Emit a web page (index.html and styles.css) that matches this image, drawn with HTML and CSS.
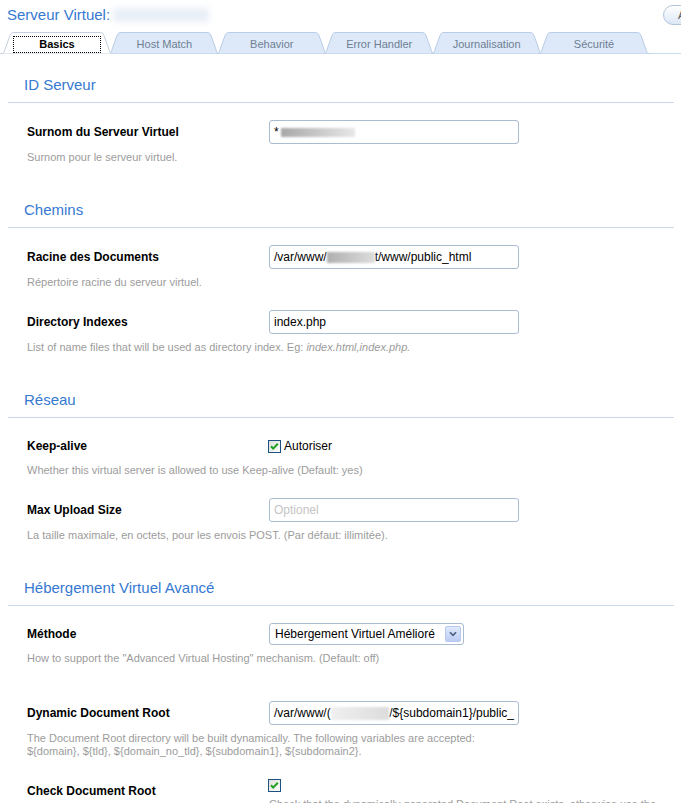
FILE: index.html
```html
<!DOCTYPE html>
<html lang="fr">
<head>
<meta charset="utf-8">
<title>Serveur Virtuel</title>
<link rel="stylesheet" href="styles.css">
</head>
<body>
<div class="header">
  <h1 class="title">Serveur Virtuel: <span class="blur-title"></span></h1>
  <button class="help-btn">Aide</button>
</div>

<div class="tabs">
  <div class="tab active">
    <svg class="tab-bg" viewBox="0 0 112 22" preserveAspectRatio="none"><path d="M0,22 C3,22 3.5,19 4.5,16 L9,3.5 C10,1 11,0.5 14,0.5 L98,0.5 C101,0.5 102,1 103,3.5 L107.5,16 C108.5,19 109,22 112,22 Z"/></svg>
    <span class="tab-label">Basics</span>
  </div>
  <div class="tab">
    <svg class="tab-bg" viewBox="0 0 112 22" preserveAspectRatio="none"><path d="M0,22 C3,22 3.5,19 4.5,16 L9,3.5 C10,1 11,0.5 14,0.5 L98,0.5 C101,0.5 102,1 103,3.5 L107.5,16 C108.5,19 109,22 112,22 Z"/></svg>
    <span class="tab-label">Host Match</span>
  </div>
  <div class="tab">
    <svg class="tab-bg" viewBox="0 0 112 22" preserveAspectRatio="none"><path d="M0,22 C3,22 3.5,19 4.5,16 L9,3.5 C10,1 11,0.5 14,0.5 L98,0.5 C101,0.5 102,1 103,3.5 L107.5,16 C108.5,19 109,22 112,22 Z"/></svg>
    <span class="tab-label">Behavior</span>
  </div>
  <div class="tab">
    <svg class="tab-bg" viewBox="0 0 112 22" preserveAspectRatio="none"><path d="M0,22 C3,22 3.5,19 4.5,16 L9,3.5 C10,1 11,0.5 14,0.5 L98,0.5 C101,0.5 102,1 103,3.5 L107.5,16 C108.5,19 109,22 112,22 Z"/></svg>
    <span class="tab-label">Error Handler</span>
  </div>
  <div class="tab">
    <svg class="tab-bg" viewBox="0 0 112 22" preserveAspectRatio="none"><path d="M0,22 C3,22 3.5,19 4.5,16 L9,3.5 C10,1 11,0.5 14,0.5 L98,0.5 C101,0.5 102,1 103,3.5 L107.5,16 C108.5,19 109,22 112,22 Z"/></svg>
    <span class="tab-label">Journalisation</span>
  </div>
  <div class="tab">
    <svg class="tab-bg" viewBox="0 0 112 22" preserveAspectRatio="none"><path d="M0,22 C3,22 3.5,19 4.5,16 L9,3.5 C10,1 11,0.5 14,0.5 L98,0.5 C101,0.5 102,1 103,3.5 L107.5,16 C108.5,19 109,22 112,22 Z"/></svg>
    <span class="tab-label">Sécurité</span>
  </div>
</div>

<div class="content">
  <section class="section">
    <h2 class="section-title">ID Serveur</h2>
    <div class="rows">
      <div class="row">
        <div class="label">Surnom du Serveur Virtuel</div>
        <div class="field"><div class="input">*<span class="blur blur-a"></span></div></div>
        <div class="desc">Surnom pour le serveur virtuel.</div>
      </div>
    </div>
  </section>

  <section class="section">
    <h2 class="section-title">Chemins</h2>
    <div class="rows">
      <div class="row">
        <div class="label">Racine des Documents</div>
        <div class="field"><div class="input">/var/www/<span class="blur blur-b"></span>t/www/public_html</div></div>
        <div class="desc">Répertoire racine du serveur virtuel.</div>
      </div>
      <div class="row">
        <div class="label">Directory Indexes</div>
        <div class="field"><div class="input">index.php</div></div>
        <div class="desc">List of name files that will be used as directory index. Eg: <em>index.html,index.php.</em></div>
      </div>
    </div>
  </section>

  <section class="section">
    <h2 class="section-title">Réseau</h2>
    <div class="rows">
      <div class="row row-check">
        <div class="label">Keep-alive</div>
        <div class="field">
          <span class="checkbox"><svg viewBox="0 0 13 13" width="13" height="13"><defs><linearGradient id="cb1" x1="0" y1="0" x2="1" y2="1"><stop offset="0" stop-color="#dcdcd7"/><stop offset="1" stop-color="#ffffff"/></linearGradient></defs><rect x="0.5" y="0.5" width="12" height="12" fill="url(#cb1)" stroke="#1c5180"/><path d="M3,6.2 L5.2,8.6 L9.8,3.8" fill="none" stroke="#21a121" stroke-width="2"/></svg></span>
          <span class="check-text">Autoriser</span>
        </div>
        <div class="desc">Whether this virtual server is allowed to use Keep-alive (Default: yes)</div>
      </div>
      <div class="row">
        <div class="label">Max Upload Size</div>
        <div class="field"><div class="input placeholder">Optionel</div></div>
        <div class="desc">La taille maximale, en octets, pour les envois POST. (Par défaut: illimitée).</div>
      </div>
    </div>
  </section>

  <section class="section">
    <h2 class="section-title">Hébergement Virtuel Avancé</h2>
    <div class="rows">
      <div class="row row-select">
        <div class="label">Méthode</div>
        <div class="field">
          <div class="select">
            <span class="select-text">Hébergement Virtuel Amélioré</span>
            <span class="select-btn"><svg viewBox="0 0 16 16" width="16" height="16"><path d="M4.5,6 L8,9.5 L11.5,6" fill="none" stroke="#4d6185" stroke-width="2"/></svg></span>
          </div>
        </div>
        <div class="desc">How to support the "Advanced Virtual Hosting" mechanism. (Default: off)</div>
      </div>
      <div class="row row-spaced">
        <div class="label">Dynamic Document Root</div>
        <div class="field"><div class="input">/var/www/(<span class="blur blur-c"></span>/${subdomain1}/public_</div></div>
        <div class="desc">The Document Root directory will be built dynamically. The following variables are accepted:<br>${domain}, ${tld}, ${domain_no_tld}, ${subdomain1}, ${subdomain2}.</div>
      </div>
      <div class="row row-stack">
        <div class="label label-mid">Check Document Root</div>
        <div class="stack">
          <span class="checkbox"><svg viewBox="0 0 13 13" width="13" height="13"><defs><linearGradient id="cb2" x1="0" y1="0" x2="1" y2="1"><stop offset="0" stop-color="#dcdcd7"/><stop offset="1" stop-color="#ffffff"/></linearGradient></defs><rect x="0.5" y="0.5" width="12" height="12" fill="url(#cb2)" stroke="#1c5180"/><path d="M3,6.2 L5.2,8.6 L9.8,3.8" fill="none" stroke="#21a121" stroke-width="2"/></svg></span>
          <div class="desc desc-inline">Check that the dynamically generated Document Root exists, otherwise use the general Document Root.</div>
        </div>
      </div>
    </div>
  </section>
</div>
</body>
</html>
```

FILE: styles.css
```css
html, body {
  margin: 0;
  padding: 0;
  overflow: hidden;
  background: #ffffff;
}

body {
  font-family: "Liberation Sans", Arial, sans-serif;
  color: #000;
  width: 681px;
}

.header {
  display: flex;
  align-items: center;
  padding: 4px 0 0 7px;
  height: 21px;
}

.title {
  margin: 0;
  font-size: 15px;
  font-weight: normal;
  line-height: 20px;
  color: #3579d1;
  display: flex;
  align-items: center;
}

.blur-title {
  display: inline-block;
  width: 96px;
  height: 14px;
  margin-left: 3px;
  background: #e9eff7;
  filter: blur(3px);
}

.help-btn {
  margin-left: auto;
  margin-right: -42px;
  width: 60px;
  height: 20px;
  border: 1px solid #b2c4da;
  border-radius: 10px;
  background: linear-gradient(#ffffff, #dbe7f6);
  font-family: "Liberation Sans", Arial, sans-serif;
  font-size: 11px;
  color: #555;
  text-align: left;
  padding: 0 0 0 14px;
}

.tabs {
  display: flex;
  margin-top: 7px;
  padding-left: 1px;
  height: 21px;
  border-bottom: 1px solid #c9dbf0;
}

.tab {
  position: relative;
  width: 112px;
  height: 22px;
  margin-right: -4.6px;
  flex: none;
}

.tab-bg {
  position: absolute;
  left: 0;
  top: 0;
  width: 112px;
  height: 22px;
}

.tab-bg path {
  fill: #dde9f9;
  stroke: #b8cde6;
  stroke-width: 1;
}

.tab.active {
  z-index: 2;
}

.tab.active .tab-bg path {
  fill: #ffffff;
  stroke: #c3cfdc;
}

.tab-label {
  position: relative;
  display: block;
  box-sizing: border-box;
  width: 88px;
  height: 17px;
  margin: 4px auto 0;
  border: 1px dotted transparent;
  font-size: 11px;
  line-height: 15px;
  text-align: center;
  color: #6e7e92;
}

.tab.active .tab-label {
  border-color: #000;
  color: #000;
  font-weight: bold;
}

.content {
  padding: 6px 7px 0 8px;
}

.section {
  padding-top: 16px;
}

.section-title {
  margin: 0;
  padding: 0 0 8px 16px;
  font-size: 15px;
  font-weight: normal;
  line-height: 18px;
  color: #3579d1;
  border-bottom: 1px solid #c8d9ec;
}

.rows {
  padding-top: 17px;
}

.row {
  display: grid;
  grid-template-columns: 242px 1fr;
  padding-left: 19px;
  margin-bottom: 21px;
}

.row-spaced {
  padding-top: 15px;
}

.label {
  display: flex;
  align-items: center;
  font-size: 12px;
  font-weight: bold;
  line-height: 14px;
}

.field {
  display: flex;
  align-items: center;
  height: 24px;
}

.row-check .field {
  height: 22px;
}

.row-select .field {
  height: 22px;
}

.desc {
  grid-column: 1 / span 2;
  margin-top: 7px;
  font-size: 11px;
  line-height: 13px;
  color: #9c9c9c;
}

.desc em {
  font-style: italic;
}

.input {
  box-sizing: border-box;
  width: 250px;
  height: 24px;
  border: 1px solid #a9bcd1;
  border-radius: 3px;
  padding: 0 4px;
  font-size: 12px;
  line-height: 22px;
  color: #000;
  white-space: nowrap;
  overflow: hidden;
  display: flex;
  align-items: center;
}

.input.placeholder {
  color: #c4c4c4;
}

.blur {
  display: inline-block;
  height: 9px;
}

.blur-a {
  width: 74px;
  margin-left: 2px;
  background: linear-gradient(to right, #a8a8a8, #e8e8e8);
  filter: blur(1px);
}

.blur-b {
  width: 48px;
  height: 11px;
  background: linear-gradient(to right, #b0b0b0, #dddddd);
  filter: blur(1px);
}

.blur-c {
  width: 60px;
  height: 13px;
  background: linear-gradient(to right, #f0f0f0, #dcdcdc);
  filter: blur(1px);
}

.checkbox {
  display: inline-flex;
  width: 13px;
  height: 13px;
  margin-left: -1px;
}

.check-text {
  margin-left: 3px;
  font-size: 12px;
  color: #000;
}

.select {
  box-sizing: border-box;
  width: 195px;
  height: 22px;
  border: 1px solid #a9bcd1;
  border-radius: 3px;
  display: flex;
  align-items: center;
  padding: 0 2px 0 5px;
  font-size: 12px;
}

.select-text {
  flex: 1;
  white-space: nowrap;
}

.select-btn {
  display: inline-flex;
  width: 16px;
  height: 16px;
  box-sizing: border-box;
  border: 1px solid #b7c9ee;
  border-radius: 2px;
  background: linear-gradient(#dfe8fb, #bccdf4);
  align-items: center;
  justify-content: center;
}

.select-btn svg {
  width: 14px;
  height: 14px;
}

.label-mid {
  align-items: flex-start;
  margin-top: 5px;
}

.stack {
  display: flex;
  flex-direction: column;
  align-items: flex-start;
}

.desc-inline {
  margin-top: 6px;
}
```
